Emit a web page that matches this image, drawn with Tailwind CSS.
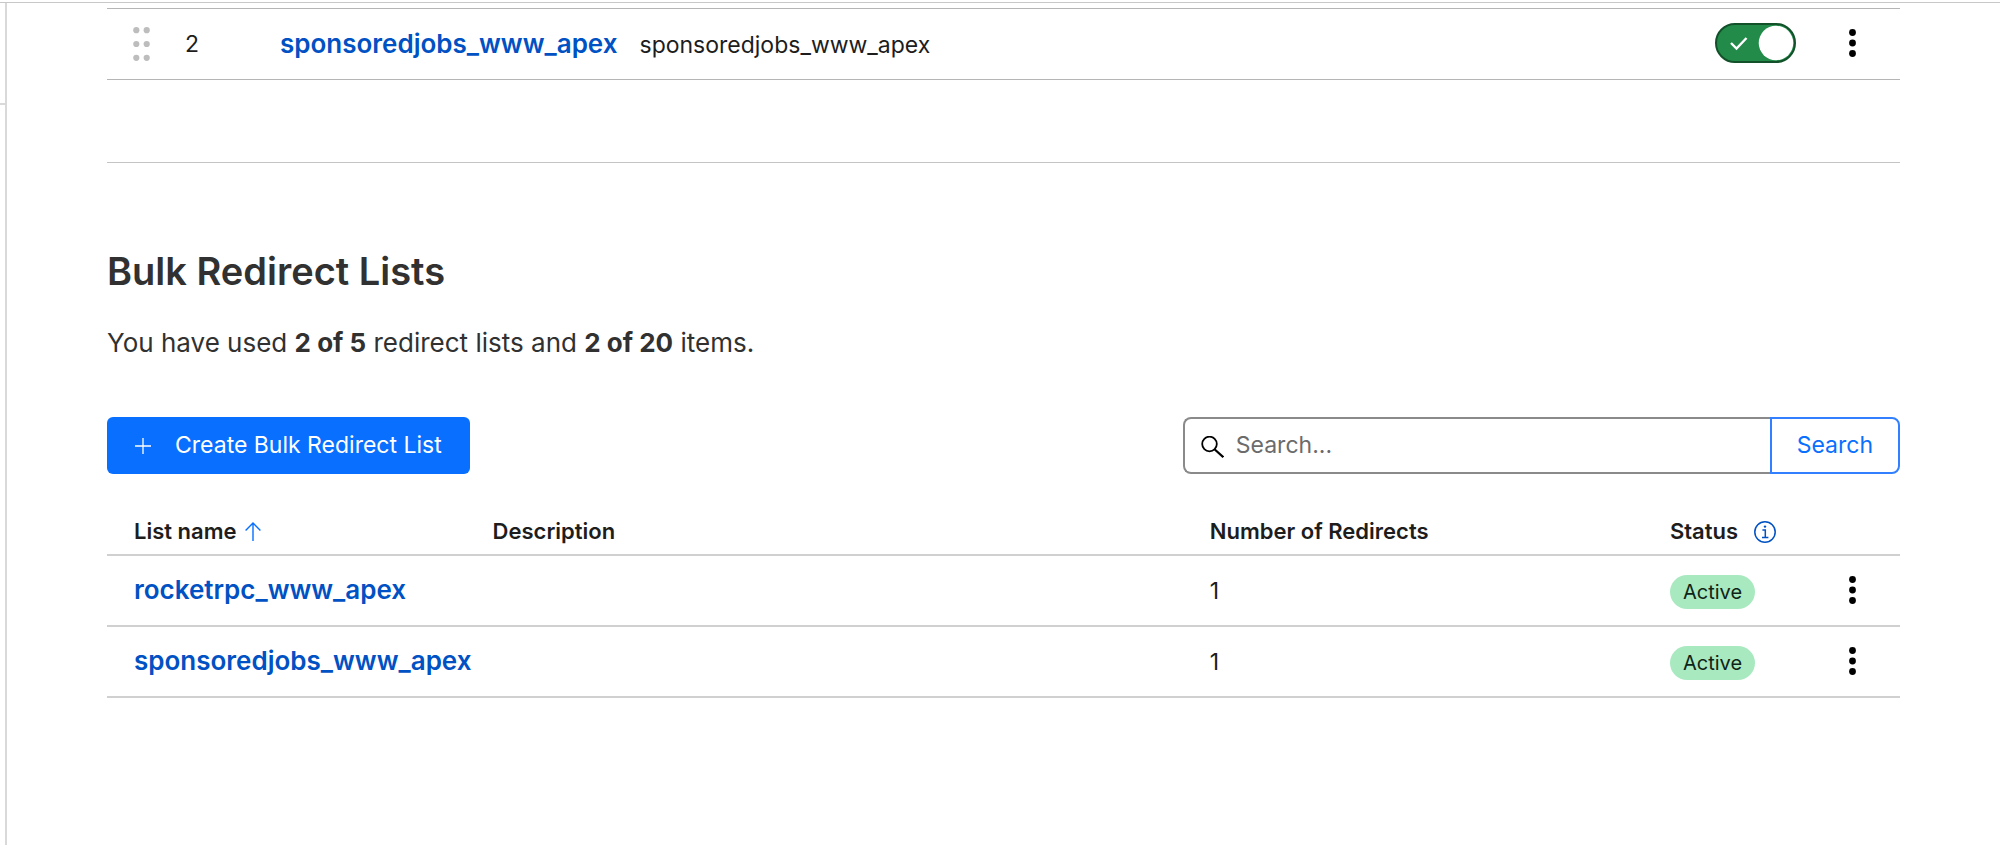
<!DOCTYPE html>
<html lang="en">
  <head>
    <meta charset="UTF-8" />
    <meta name="viewport" content="width=device-width, initial-scale=1.0" />
    <title>Bulk Redirects</title>
    <script src="https://cdn.jsdelivr.net/npm/@tailwindcss/browser@4"></script>
  </head>
  <body class="flex min-h-screen flex-col bg-white font-['Inter',sans-serif] text-[23px] text-[#1d1d1d]">
    <header class="h-[3px] border-b border-[#c8c8c8]"></header>

    <div class="flex flex-1">
      <!-- Collapsed sidebar -->
      <aside class="w-[7px] shrink-0 border-r-2 border-[#d9d9d9]">
        <div class="h-[102px] border-b-2 border-[#d9d9d9]"></div>
      </aside>

      <main class="flex-1 pt-[5px] pr-[100px] pl-[100px]">
        <!-- Redirect rules -->
        <table class="w-full table-fixed border-y border-[#b5b5b5]">
          <colgroup>
            <col class="w-[54px]" />
            <col class="w-[119px]" />
            <col />
            <col class="w-[10%]" />
            <col class="w-[5%]" />
          </colgroup>
          <tbody>
            <tr class="h-[71px]">
              <td class="pl-[26px]">
                <button type="button" aria-label="Reorder rule" class="block">
                  <svg class="h-9 w-[17px]" viewBox="0 0 17 36" fill="#bdbdbd">
                    <circle cx="3.3" cy="4.2" r="3.1" />
                    <circle cx="13.7" cy="4.2" r="3.1" />
                    <circle cx="3.3" cy="18" r="3.1" />
                    <circle cx="13.7" cy="18" r="3.1" />
                    <circle cx="3.3" cy="31.8" r="3.1" />
                    <circle cx="13.7" cy="31.8" r="3.1" />
                  </svg>
                </button>
              </td>
              <td class="pl-6">2</td>
              <td class="pb-0.5">
                <div class="flex items-baseline gap-[22px]">
                  <a href="#" class="text-[26px] font-semibold text-[#0051c3]">sponsoredjobs_www_apex</a>
                  <span>sponsoredjobs_www_apex</span>
                </div>
              </td>
              <td class="pr-[14px] pb-0.5">
                <label class="relative ml-auto block h-10 w-[81px]">
                  <input type="checkbox" checked aria-label="Enable rule" class="block h-10 w-[81px] appearance-none rounded-full border-2 border-[#12512a] bg-[#228b49]" />
                  <svg class="pointer-events-none absolute inset-0 h-10 w-[81px]" viewBox="0 0 81 40">
                    <path d="M16 20 L21.5 25.5 L31.5 15" fill="none" stroke="#fff" stroke-width="2.4" />
                    <circle cx="61" cy="20" r="17.3" fill="#fff" />
                  </svg>
                </label>
              </td>
              <td class="pb-0.5">
                <button type="button" aria-label="Rule actions" class="mr-11 ml-auto block">
                  <svg class="h-[28px] w-[7px]" viewBox="0 0 7 28">
                    <circle cx="3.5" cy="3.5" r="3.4" />
                    <circle cx="3.5" cy="14" r="3.4" />
                    <circle cx="3.5" cy="24.5" r="3.4" />
                  </svg>
                </button>
              </td>
            </tr>
          </tbody>
        </table>

        <hr class="mt-[82px] border-[#c4c4c4]" />

        <!-- Redirect lists -->
        <h1 class="mt-[84px] text-[38px] leading-12 font-semibold text-[#313131]">Bulk Redirect Lists</h1>
        <p class="mt-7 text-[26px] leading-10 text-[#313131]">
          You have used <strong>2 of 5</strong> redirect lists and <strong>2 of 20</strong> items.
        </p>

        <div class="mt-[54px] flex items-center justify-between">
          <button type="button" class="flex h-[57px] items-center gap-6 rounded-md bg-[#086fff] px-7 text-white">
            <svg class="size-4" viewBox="0 0 16 16" fill="none" stroke="currentColor" stroke-width="1.3">
              <path d="M8 0v16M0 8h16" />
            </svg>
            Create Bulk Redirect List
          </button>

          <form class="flex h-[57px] w-[40%]">
            <div class="flex flex-1 items-center gap-3 rounded-l-lg border-2 border-r-0 border-[#8a8a8a] pl-4">
              <svg class="mt-1 size-[23px] shrink-0" viewBox="0 0 23 23" fill="none" stroke="#000" stroke-width="1.8">
                <circle cx="8.5" cy="8" r="7.3" />
                <path d="M13.5 13.2 L22.3 21.2" stroke-width="2.2" />
              </svg>
              <input type="text" aria-label="Search lists" placeholder="Search..." class="w-full min-w-0 outline-none placeholder:text-[#6b6b6b]" />
            </div>
            <button type="submit" class="rounded-r-lg border-2 border-[#3280ff] px-[25px] text-[#086fff]">Search</button>
          </form>
        </div>

        <table class="mt-[35px] w-full table-fixed text-left">
          <colgroup>
            <col class="w-[20%]" />
            <col class="w-[40%]" />
            <col />
            <col class="w-[8%]" />
            <col class="w-[5%]" />
          </colgroup>
          <thead class="text-[22px]">
            <tr class="h-[46px] border-b-2 border-[#d0d0d0]">
              <th class="pl-[27px] font-semibold">
                <button type="button" class="flex items-center gap-2">
                  List name
                  <svg class="h-[19px] w-4" viewBox="0 0 16 19" fill="none" stroke="#086fff" stroke-width="1.4">
                    <path d="M8 19V1M.6 8.6 8 1l7.4 7.6" />
                  </svg>
                </button>
              </th>
              <th class="pl-[27px] font-semibold">Description</th>
              <th class="pl-[27px] font-semibold">Number of Redirects</th>
              <th class="pl-[3px] font-semibold">
                <div class="flex items-center gap-4">
                  Status
                  <button type="button" aria-label="About status">
                    <svg class="size-[22px]" viewBox="0 0 22 22" fill="none" stroke="#0051c3" stroke-width="1.5">
                      <circle cx="11" cy="11" r="10.2" />
                      <path d="M8.4 9h2.9v7.4M8 16.6h6.4" />
                      <circle cx="11" cy="5.6" r="1.2" fill="#0051c3" stroke="none" />
                    </svg>
                  </button>
                </div>
              </th>
              <th></th>
            </tr>
          </thead>
          <tbody id="lists"></tbody>
        </table>
      </main>
    </div>

    <script>
      const lists = [
        { name: "rocketrpc_www_apex", redirects: 1, status: "Active" },
        { name: "sponsoredjobs_www_apex", redirects: 1, status: "Active" },
      ];

      document.getElementById("lists").innerHTML = lists.map(list => `
        <tr class="h-[71px] border-b-2 border-[#d0d0d0]">
          <td class="pb-0.5 pl-[27px] whitespace-nowrap">
            <a href="#" class="text-[26px] font-semibold text-[#0051c3]">${list.name}</a>
          </td>
          <td></td>
          <td class="pt-0.5 pl-[27px]">${list.redirects}</td>
          <td class="pt-0.5 pl-[3px]">
            <span class="flex h-[34px] w-fit items-center rounded-full bg-[#a8e9c0] px-[13px] text-[20px] text-[#0f2417]">${list.status}</span>
          </td>
          <td class="pb-0.5">
            <button type="button" aria-label="List actions" class="mr-11 ml-auto block">
              <svg class="h-[28px] w-[7px]" viewBox="0 0 7 28">
                <circle cx="3.5" cy="3.5" r="3.4" />
                <circle cx="3.5" cy="14" r="3.4" />
                <circle cx="3.5" cy="24.5" r="3.4" />
              </svg>
            </button>
          </td>
        </tr>
      `).join("");
    </script>
  </body>
</html>
